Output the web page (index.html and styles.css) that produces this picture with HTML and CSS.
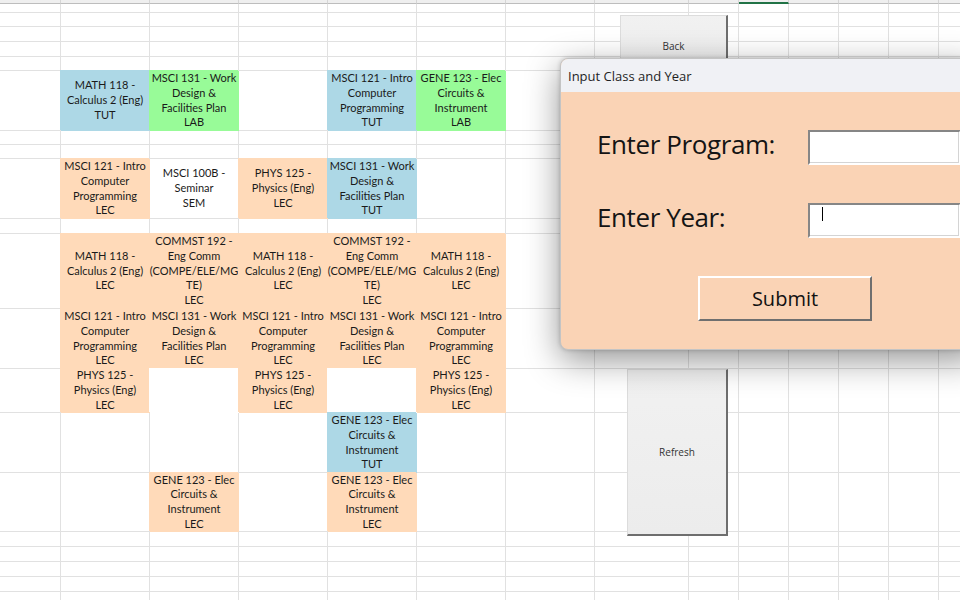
FILE: index.html
```html
<!DOCTYPE html>
<html lang="en">
<head>
<meta charset="utf-8">
<title>Timetable</title>
<link rel="stylesheet" href="styles.css">
</head>
<body>
<div class="workbook">
  <div class="col-headers">
    <div></div><div></div><div></div><div></div><div></div><div></div><div></div><div></div><div></div><div class="selected"></div><div></div><div></div><div></div><div></div>
  </div>
  <div class="sheet">
    <div></div><div></div><div></div><div></div><div></div><div></div><div></div><div></div><div></div><div></div><div></div><div></div><div></div><div></div>
    <div></div><div></div><div></div><div></div><div></div><div></div><div></div><div></div><div></div><div></div><div></div><div></div><div></div><div></div>
    <div></div><div></div><div></div><div></div><div></div><div></div><div></div><div></div><div></div><div></div><div></div><div></div><div></div><div></div>
    <div></div><div></div><div></div><div></div><div></div><div></div><div></div><div></div><div></div><div></div><div></div><div></div><div></div><div></div>
    <div></div><div></div><div></div><div></div><div></div><div></div><div></div><div></div><div></div><div></div><div></div><div></div><div></div><div></div>

    <div></div>
    <div class="cls tut">MATH 118 -<br>Calculus 2 (Eng)<br>TUT</div>
    <div class="cls lab">MSCI 131 - Work<br>Design &amp;<br>Facilities Plan<br>LAB</div>
    <div></div>
    <div class="cls tut">MSCI 121 - Intro<br>Computer<br>Programming<br>TUT</div>
    <div class="cls lab">GENE 123 - Elec<br>Circuits &amp;<br>Instrument<br>LAB</div>
    <div></div><div></div><div></div><div></div><div></div><div></div><div></div><div></div>

    <div></div><div></div><div></div><div></div><div></div><div></div><div></div><div></div><div></div><div></div><div></div><div></div><div></div><div></div>
    <div></div><div></div><div></div><div></div><div></div><div></div><div></div><div></div><div></div><div></div><div></div><div></div><div></div><div></div>

    <div></div>
    <div class="cls lec">MSCI 121 - Intro<br>Computer<br>Programming<br>LEC</div>
    <div class="cls">MSCI 100B -<br>Seminar<br>SEM</div>
    <div class="cls lec">PHYS 125 -<br>Physics (Eng)<br>LEC</div>
    <div class="cls tut">MSCI 131 - Work<br>Design &amp;<br>Facilities Plan<br>TUT</div>
    <div></div><div></div><div></div><div></div><div></div><div></div><div></div><div></div><div></div>

    <div></div><div></div><div></div><div></div><div></div><div></div><div></div><div></div><div></div><div></div><div></div><div></div><div></div><div></div>

    <div></div>
    <div class="cls lec">MATH 118 -<br>Calculus 2 (Eng)<br>LEC</div>
    <div class="cls lec">COMMST 192 -<br>Eng Comm<br>(COMPE/ELE/MG<br>TE)<br>LEC</div>
    <div class="cls lec">MATH 118 -<br>Calculus 2 (Eng)<br>LEC</div>
    <div class="cls lec">COMMST 192 -<br>Eng Comm<br>(COMPE/ELE/MG<br>TE)<br>LEC</div>
    <div class="cls lec">MATH 118 -<br>Calculus 2 (Eng)<br>LEC</div>
    <div></div><div></div><div></div><div></div><div></div><div></div><div></div><div></div>

    <div></div>
    <div class="cls lec">MSCI 121 - Intro<br>Computer<br>Programming<br>LEC</div>
    <div class="cls lec">MSCI 131 - Work<br>Design &amp;<br>Facilities Plan<br>LEC</div>
    <div class="cls lec">MSCI 121 - Intro<br>Computer<br>Programming<br>LEC</div>
    <div class="cls lec">MSCI 131 - Work<br>Design &amp;<br>Facilities Plan<br>LEC</div>
    <div class="cls lec">MSCI 121 - Intro<br>Computer<br>Programming<br>LEC</div>
    <div></div><div></div><div></div><div></div><div></div><div></div><div></div><div></div>

    <div></div>
    <div class="cls lec">PHYS 125 -<br>Physics (Eng)<br>LEC</div>
    <div class="blank"></div>
    <div class="cls lec">PHYS 125 -<br>Physics (Eng)<br>LEC</div>
    <div class="blank"></div>
    <div class="cls lec">PHYS 125 -<br>Physics (Eng)<br>LEC</div>
    <div></div><div></div><div></div><div></div><div></div><div></div><div></div><div></div>

    <div></div><div></div><div></div><div></div>
    <div class="cls tut">GENE 123 - Elec<br>Circuits &amp;<br>Instrument<br>TUT</div>
    <div></div><div></div><div></div><div></div><div></div><div></div><div></div><div></div><div></div>

    <div></div><div></div>
    <div class="cls lec">GENE 123 - Elec<br>Circuits &amp;<br>Instrument<br>LEC</div>
    <div></div>
    <div class="cls lec">GENE 123 - Elec<br>Circuits &amp;<br>Instrument<br>LEC</div>
    <div></div><div></div><div></div><div></div><div></div><div></div><div></div><div></div><div></div>

    <div></div><div></div><div></div><div></div><div></div><div></div><div></div><div></div><div></div><div></div><div></div><div></div><div></div><div></div>
    <div></div><div></div><div></div><div></div><div></div><div></div><div></div><div></div><div></div><div></div><div></div><div></div><div></div><div></div>
    <div></div><div></div><div></div><div></div><div></div><div></div><div></div><div></div><div></div><div></div><div></div><div></div><div></div><div></div>
    <div></div><div></div><div></div><div></div><div></div><div></div><div></div><div></div><div></div><div></div><div></div><div></div><div></div><div></div>
    <div></div><div></div><div></div><div></div><div></div><div></div><div></div><div></div><div></div><div></div><div></div><div></div><div></div><div></div>
  </div>

  <button class="sheet-btn back-btn" type="button">Back</button>
  <button class="sheet-btn refresh-btn" type="button">Refresh</button>

  <div class="dialog" role="dialog" aria-label="Input Class and Year">
    <div class="titlebar">Input Class and Year</div>
    <form class="dialog-body">
      <label class="field-label">Enter Program:</label>
      <div class="textbox"></div>
      <label class="field-label">Enter Year:</label>
      <div class="textbox"><span class="caret"></span></div>
      <button class="submit" type="button">Submit</button>
    </form>
  </div>
</div>
</body>
</html>
```

FILE: styles.css
```css
* { box-sizing: border-box; }

html, body {
  margin: 0;
  padding: 0;
  width: 960px;
  height: 600px;
  overflow: hidden;
  background: #ffffff;
}

.workbook {
  position: relative;
  width: 960px;
  height: 600px;
  overflow: hidden;
}

.col-headers {
  display: grid;
  grid-template-columns: 61px repeat(6, 89px) 94px repeat(6, 50px);
  height: 4px;
  background: #efefef;
}
.col-headers > div {
  border-right: 1px solid #d6d6d6;
  border-bottom: 1px solid #bdbdbd;
}
.col-headers > .selected {
  border-bottom: 2px solid #217346;
}

.sheet {
  display: grid;
  grid-template-columns: 61px repeat(6, 89px) 94px repeat(6, 50px);
  grid-template-rows: 9px 14px 15px 15px 14px 60px 14px 14px 60px 15px 75px 60px 44px 60px 59px 15px 15px 15px 15px 15px;
  font-family: "Lato", "Liberation Sans", sans-serif;
  font-size: 11px;
  line-height: 14.7px;
  color: #1a1a1a;
}
.sheet > div {
  border-right: 1px solid #e1e1e1;
  border-bottom: 1px solid #e1e1e1;
}

.sheet > .cls {
  display: flex;
  align-items: center;
  justify-content: center;
  text-align: center;
  white-space: nowrap;
}
.sheet > .lec,
.sheet > .tut,
.sheet > .lab,
.sheet > .blank {
  border-color: var(--fill);
  background: var(--fill);
  box-shadow: -1px -1px 0 0 var(--fill);
}
.sheet > .lec { --fill: #ffdab9; }
.sheet > .tut { --fill: #add8e6; }
.sheet > .lab { --fill: #98fb98; }
.sheet > .blank { --fill: #ffffff; }

/* floating sheet buttons (shapes) */
.sheet-btn {
  position: absolute;
  margin: 0;
  padding: 0;
  font-family: "Open Sans", "Liberation Sans", sans-serif;
  font-size: 10px;
  color: #333333;
  background: linear-gradient(#f1f1f1, #ececec);
  border-top: 1px solid #dcdcdc;
  border-left: 1px solid #dcdcdc;
  border-right: 2px solid #6e6e6e;
  border-bottom: 2px solid #6e6e6e;
  display: flex;
  align-items: center;
  justify-content: center;
}
.back-btn {
  left: 620px;
  top: 15px;
  width: 108px;
  height: 62px;
}
.refresh-btn {
  left: 627px;
  top: 369px;
  width: 101px;
  height: 167px;
}

/* userform dialog */
.dialog {
  position: absolute;
  left: 560px;
  top: 58px;
  width: 420px;
  height: 292px;
  border: 1px solid #c4c4c4;
  border-radius: 8px;
  overflow: hidden;
  background: #fad3b5;
  box-shadow: 0 10px 34px rgba(0, 0, 0, 0.42), 0 0 4px rgba(0, 0, 0, 0.2);
  display: flex;
  flex-direction: column;
  font-family: "Open Sans", "Noto Sans", sans-serif;
}
.titlebar {
  height: 33px;
  flex: none;
  background: #f0f1f5;
  display: flex;
  align-items: center;
  padding-left: 7px;
  font-size: 13px;
  color: #1f1f1f;
}
.dialog-body {
  flex: 1;
  margin: 0;
  display: grid;
  grid-template-columns: 210px 153px;
  grid-template-rows: 35px 35px 45px;
  row-gap: 38px;
  padding: 38px 0 0 37px;
}
.field-label {
  align-self: start;
  margin-top: 1px;
  margin-left: -1px;
  font-size: 26px;
  line-height: 26px;
  letter-spacing: -0.4px;
  color: #141414;
  white-space: nowrap;
}
.textbox {
  background: #ffffff;
  border-style: solid;
  border-width: 2px;
  border-color: #868686 #ffffff #ffffff #868686;
  box-shadow: inset -1px -1px 0 #d4d4d4;
  display: flex;
  align-items: flex-start;
}
.caret {
  width: 1px;
  height: 14px;
  margin: 2px 0 0 12px;
  background: #000000;
}
.submit {
  grid-column: 1 / -1;
  justify-self: start;
  margin: 0 0 0 100px;
  width: 174px;
  height: 45px;
  padding: 0;
  background: transparent;
  border-style: solid;
  border-width: 2px;
  border-color: #ffffff #6f6f6f #6f6f6f #ffffff;
  font-family: "Open Sans", "Noto Sans", sans-serif;
  font-size: 20px;
  color: #111111;
}
```
